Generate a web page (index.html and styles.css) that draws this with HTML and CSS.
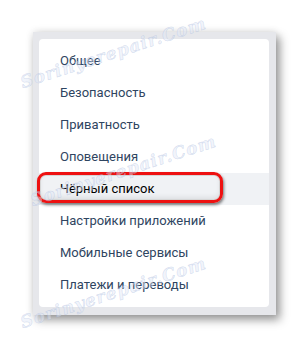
FILE: index.html
```html
<!DOCTYPE html>
<html lang="ru">
<head>
<meta charset="utf-8">
<link rel="stylesheet" href="styles.css">
</head>
<body>
<div class="frame">
  <ul class="menu">
    <li class="item">Общее</li>
    <li class="item">Безопасность</li>
    <li class="item">Приватность</li>
    <li class="item">Оповещения</li>
    <li class="item item-sel">Чёрный список<span class="mark"></span></li>
    <li class="item">Настройки приложений</li>
    <li class="item">Мобильные сервисы</li>
    <li class="item">Платежи и переводы</li>
  </ul>
</div>
<div class="wm wm1">Sorinyerepair.Com</div>
<div class="wm wm2">Sorinyerepair.Com</div>
<div class="wm wm3">Sorinyerepair.Com</div>
</body>
</html>
```
FILE: styles.css
```css
html, body {
  margin: 0;
  background: #fff;
}
body {
  padding: 32px 0 0 33px;
  position: relative;
  width: 307px;
  height: 351px;
  box-sizing: border-box;
  overflow: hidden;
  font-family: Roboto, "Open Sans", sans-serif;
}
.frame {
  width: 243px;
  box-sizing: border-box;
  padding: 7px 7px 8px 6px;
  background: #e6e7eb;
  box-shadow: 4px 5px 9px rgba(0, 0, 0, 0.38), 0 0 8px rgba(0, 0, 0, 0.12);
}
.menu {
  list-style: none;
  margin: 0;
  padding: 6px 0;
  background: #fff;
  border-radius: 4px;
}
.item {
  position: relative;
  height: 32px;
  line-height: 32px;
  padding-left: 21px;
  font-size: 13px;
  color: #2f4561;
}
.item-sel {
  background: #f0f2f5;
  color: #000;
}
.mark {
  position: absolute;
  left: -2px;
  top: -1px;
  width: 186px;
  height: 31px;
  box-sizing: border-box;
  border: 3px solid #ee1111;
  border-radius: 9px;
  box-shadow: 1px 2px 3px rgba(0, 0, 0, 0.5), inset 0 0 0 1px #d6d6d6, inset 0 -3px 5px rgba(0, 0, 0, 0.08);
}
.wm {
  position: absolute;
  font-family: "DejaVu Serif", serif;
  font-style: italic;
  font-weight: bold;
  font-size: 17px;
  letter-spacing: 1px;
  color: rgba(225, 232, 248, 0.45);
  -webkit-text-stroke: 0.5px rgba(160, 178, 215, 0.45);
  transform: rotate(-18deg);
  transform-origin: left bottom;
  white-space: nowrap;
}
.wm1 { left: 24px; top: 72px; }
.wm2 { left: 34px; top: 190px; }
.wm3 { left: 24px; top: 312px; }
```
